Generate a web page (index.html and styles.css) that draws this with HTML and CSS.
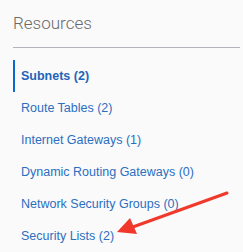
FILE: index.html
```html
<!DOCTYPE html>
<html lang="en">
<head>
    <meta charset="UTF-8">
    <title>Resources</title>
    <link rel="stylesheet" href="styles.css">
</head>
<body>
    <div class="resources">
        <h2 class="resources-title">Resources</h2>
        <ul class="resource-list">
            <li class="resource-item active">Subnets (2)</li>
            <li class="resource-item">Route Tables (2)</li>
            <li class="resource-item">Internet Gateways (1)</li>
            <li class="resource-item">Dynamic Routing Gateways (0)</li>
            <li class="resource-item">Network Security Groups (0)</li>
            <li class="resource-item">Security Lists (2)</li>
        </ul>

        <svg class="annotation" width="243" height="252" viewBox="0 0 243 252">
            <line x1="227" y1="193" x2="130" y2="228" stroke="#f0392b" stroke-width="3" stroke-linecap="round"></line>
            <polygon points="117,232 130,218 137,234" fill="#f0392b"></polygon>
        </svg>
    </div>
</body>
</html>
```

FILE: styles.css
```css
body {
    margin: 0;
    background-color: #fafafb;
    font-family: "Liberation Sans", Arial, sans-serif;
}
.resources {
    position: relative;
    padding: 13px 3px 0 13px;
    height: 239px;
}
.resources-title {
    margin: 0;
    font-family: Roboto, "Liberation Sans", Arial, sans-serif;
    font-size: 17px;
    font-weight: 300;
    line-height: 20px;
    color: #6a6a6a;
    padding-bottom: 14px;
    border-bottom: 1px solid #b3b3bb;
}
.resource-list {
    list-style: none;
    margin: 12px 0 0;
    padding: 0;
}
.resource-item {
    height: 32px;
    line-height: 32px;
    font-size: 12.5px;
    color: #2b6fc0;
    border-left: 2px solid transparent;
    padding-left: 6px;
}
.resource-item.active {
    font-weight: bold;
    color: #1f65b8;
    border-left-color: #0b67cc;
}
.annotation {
    position: absolute;
    top: 0;
    left: 0;
}
```
